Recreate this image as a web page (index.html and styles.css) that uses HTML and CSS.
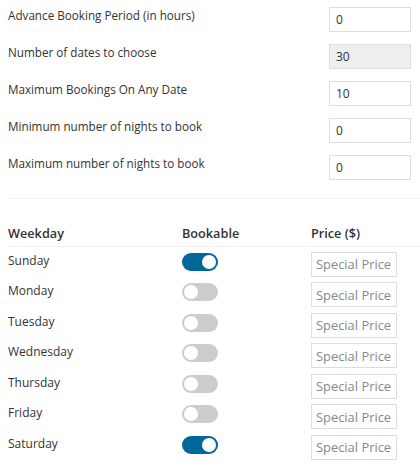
FILE: index.html
```html
<!DOCTYPE html>
<html>
<head>
<meta charset="utf-8">
<link rel="stylesheet" href="styles.css">
</head>
<body>
<div class="settings">
  <div class="field"><label class="field-label">Advance Booking Period (in hours)</label><input class="field-input" type="text" value="0"></div>
  <div class="field"><label class="field-label">Number of dates to choose</label><input class="field-input" type="text" value="30" disabled></div>
  <div class="field"><label class="field-label">Maximum Bookings On Any Date</label><input class="field-input" type="text" value="10"></div>
  <div class="field"><label class="field-label">Minimum number of nights to book</label><input class="field-input" type="text" value="0"></div>
  <div class="field"><label class="field-label">Maximum number of nights to book</label><input class="field-input" type="text" value="0"></div>
</div>
<div class="separator"></div>
<div class="days">
  <div class="days-head">
    <div>Weekday</div><div>Bookable</div><div>Price ($)</div>
  </div>
  <div class="day-row"><div class="day-name">Sunday</div><div><span class="toggle on"><span class="knob"></span></span></div><div><input class="price" type="text" placeholder="Special Price"></div></div>
  <div class="day-row"><div class="day-name">Monday</div><div><span class="toggle"><span class="knob"></span></span></div><div><input class="price" type="text" placeholder="Special Price"></div></div>
  <div class="day-row"><div class="day-name">Tuesday</div><div><span class="toggle"><span class="knob"></span></span></div><div><input class="price" type="text" placeholder="Special Price"></div></div>
  <div class="day-row"><div class="day-name">Wednesday</div><div><span class="toggle"><span class="knob"></span></span></div><div><input class="price" type="text" placeholder="Special Price"></div></div>
  <div class="day-row"><div class="day-name">Thursday</div><div><span class="toggle"><span class="knob"></span></span></div><div><input class="price" type="text" placeholder="Special Price"></div></div>
  <div class="day-row"><div class="day-name">Friday</div><div><span class="toggle"><span class="knob"></span></span></div><div><input class="price" type="text" placeholder="Special Price"></div></div>
  <div class="day-row"><div class="day-name">Saturday</div><div><span class="toggle on"><span class="knob"></span></span></div><div><input class="price" type="text" placeholder="Special Price"></div></div>
</div>
</body>
</html>
```
FILE: styles.css
```css
* { box-sizing: border-box; }
html, body { background: #fff; }
body {
  margin: 0;
  padding: 7px 0 0 8px;
  font-family: "Open Sans", "Liberation Sans", sans-serif;
  font-size: 12px;
  color: #333;
  overflow: hidden;
}
.settings {
  display: flex;
  flex-direction: column;
  gap: 12px;
  padding-right: 9px;
}
.field {
  display: flex;
  justify-content: space-between;
  align-items: flex-start;
}
.field-label {
  font-size: 11.7px;
  line-height: 16px;
}
.field-input {
  width: 82px;
  height: 25px;
  border: 1px solid #ddd;
  border-radius: 0;
  padding: 0 6px;
  font-family: inherit;
  font-size: 12px;
  color: #333;
  background: #fff;
  outline: none;
}
.field-input:disabled {
  background: #eee;
  color: #333;
}
.separator {
  margin-top: 18px;
  height: 1px;
  background: #f0f0f0;
}
.days-head,
.day-row {
  display: grid;
  grid-template-columns: 174px 129px 1fr;
}
.days-head {
  padding-top: 25px;
  padding-bottom: 4px;
  border-bottom: 1px solid #eee;
  font-size: 12.7px;
  font-weight: 600;
  line-height: 18px;
}
.day-row {
  height: 30.5px;
  padding-top: 4.5px;
  align-items: start;
}
.day-name {
  line-height: 17px;
}
.toggle {
  display: block;
  position: relative;
  width: 36px;
  height: 18px;
  margin-top: 1px;
  border-radius: 9px;
  background: #ccc;
}
.toggle.on {
  background: #006799;
}
.knob {
  position: absolute;
  top: 2px;
  left: 2px;
  width: 14px;
  height: 14px;
  border-radius: 50%;
  background: #fff;
}
.toggle.on .knob {
  left: 20px;
}
.price {
  display: block;
  width: 86px;
  height: 25px;
  border: 1px solid #ddd;
  border-radius: 0;
  padding: 0 4px;
  font-family: inherit;
  font-size: 12.9px;
  background: #fff;
  outline: none;
}
.price::placeholder {
  color: #888;
  opacity: 1;
}
```
